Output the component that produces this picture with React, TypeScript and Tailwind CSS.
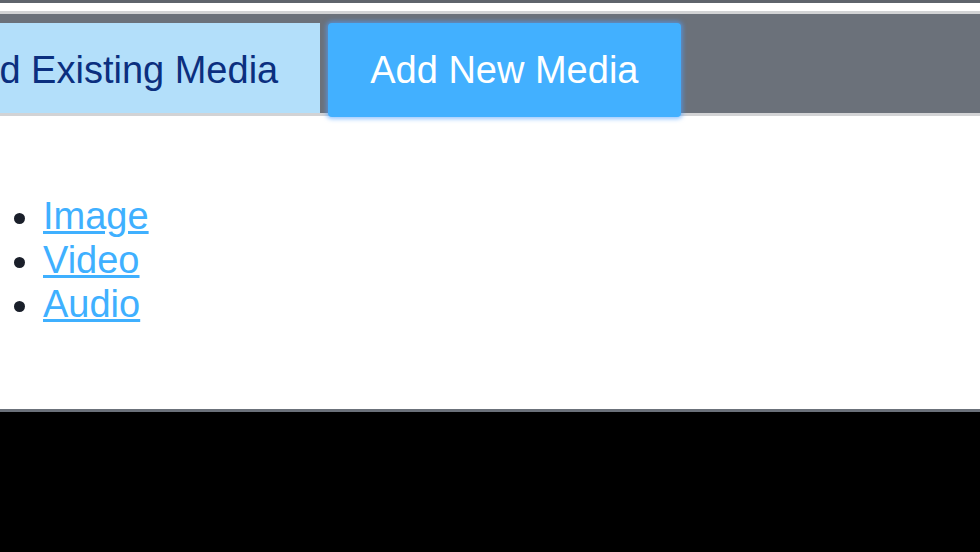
import React from 'react';

const links = ['Image', 'Video', 'Audio'];

function MediaTabs() {
  return (
    <div className="bg-[#6b717a] h-[102px] pt-[9px] flex items-start border-b-[3px] border-[#d2d3d5]">
      <div className="h-[90px] bg-[#b3dffa] text-[#0b2f7f] flex items-center pt-[4px] px-[42px] ml-[-106px] shrink-0">
        Load Existing Media
      </div>
      <button className="relative z-10 ml-[8px] h-[94px] pl-[42px] pr-[43px] rounded-[4px] bg-[#42b0ff] text-white shadow-[0_0_4px_2px_rgba(80,160,255,0.6)] shrink-0">
        Add New Media
      </button>
    </div>
  );
}

export default function App() {
  return (
    <div className="h-[552px] w-[980px] bg-black overflow-hidden text-[38px] font-['Liberation_Sans',Arial,sans-serif]">
      <div className="h-[3px] bg-[#5f646c]" />
      <div className="h-[8px] bg-white" />
      <div className="h-[3px] bg-[#d2d3d5]" />
      <MediaTabs />
      <div className="bg-white h-[296px] border-b-[3px] border-[#6b717a] pt-[78px]">
        <ul className="list-disc pl-[43px] text-[#1a1f2a] leading-[44px]">
          {links.map(l => (
            <li key={l}>
              <a href="#" className="text-[#3fb0ff] underline">{l}</a>
            </li>
          ))}
        </ul>
      </div>
    </div>
  );
}
